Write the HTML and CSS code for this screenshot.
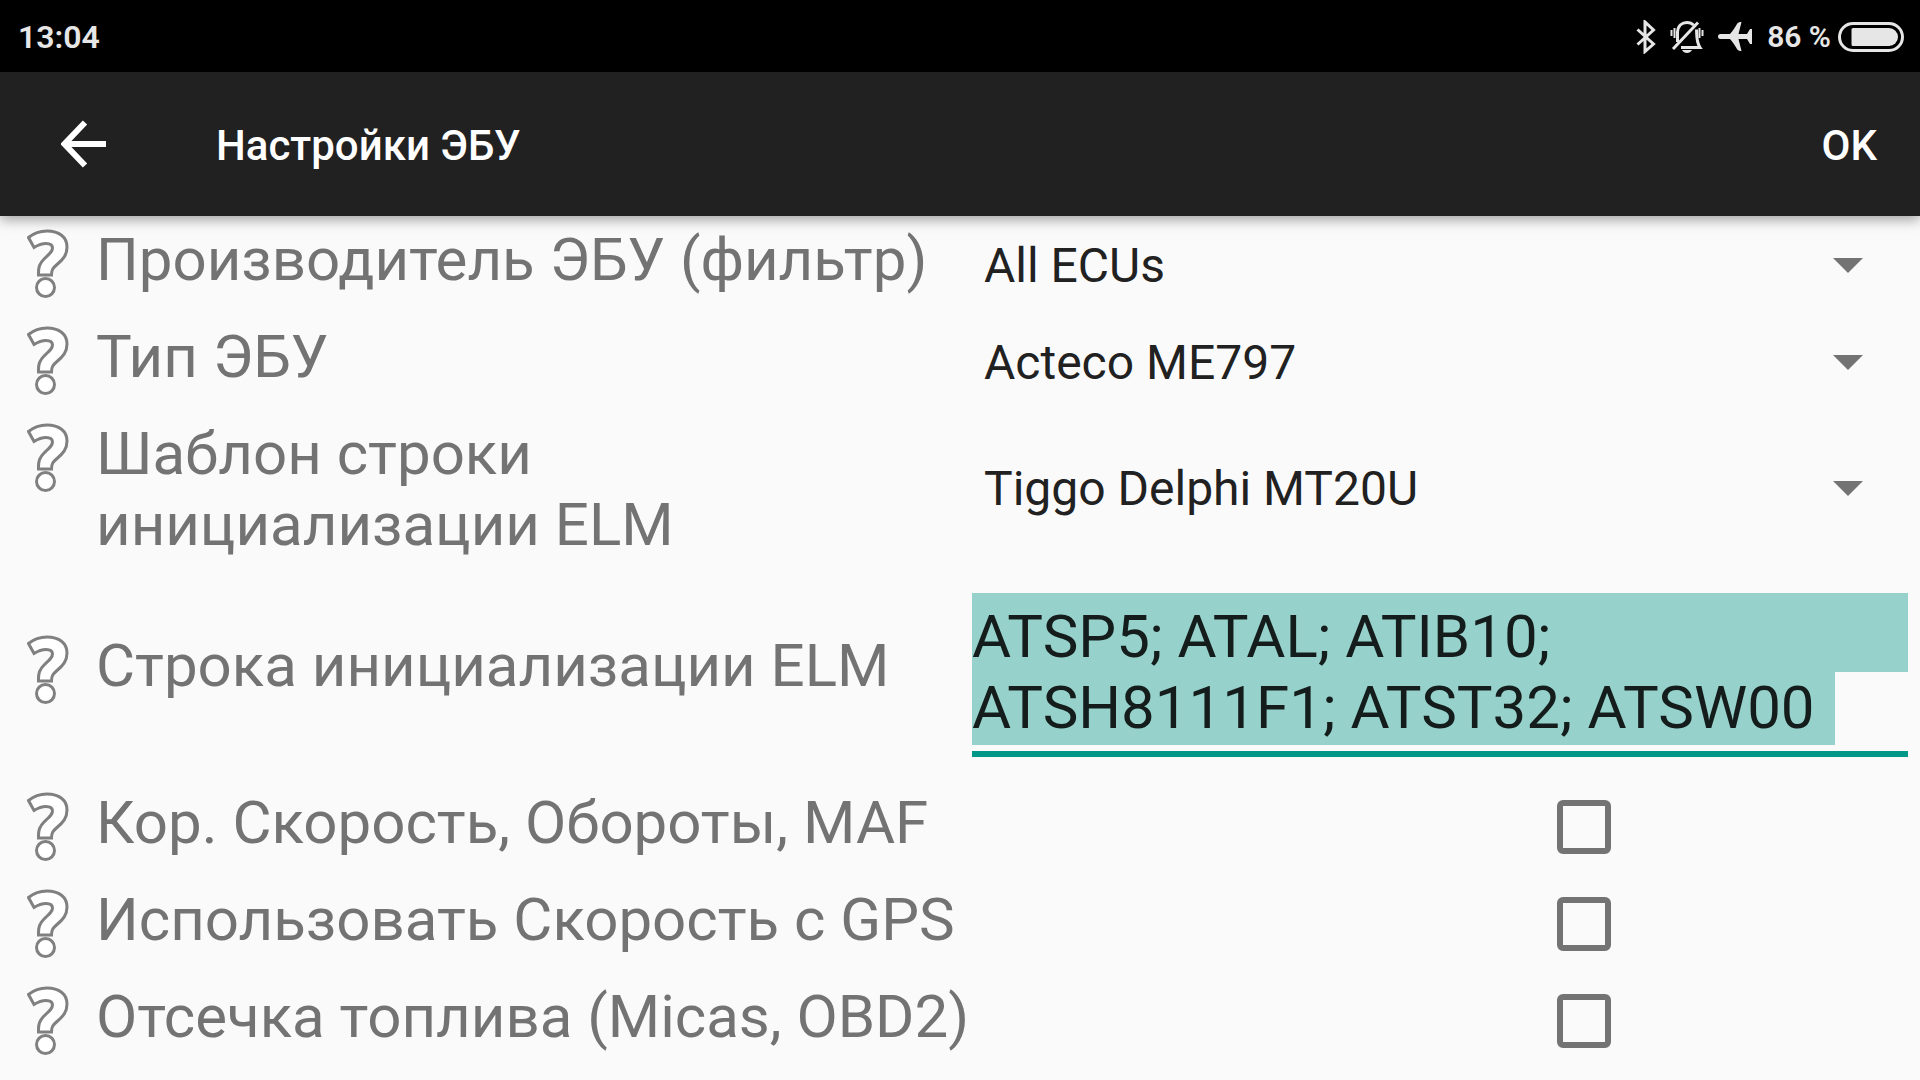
FILE: index.html
```
<!DOCTYPE html>
<html lang="ru">
<head>
  <meta charset="UTF-8" />
  <meta name="viewport" content="width=device-width, initial-scale=1.0" />
  <title>Настройки ЭБУ</title>
  <link rel="stylesheet" href="styles.css">
</head>
<body>

  <!-- shared question mark icon -->
  <svg class="sprite" aria-hidden="true">
    <symbol id="help" viewBox="0 0 42 70">
      <path d="M1.500 8.500C7 4 13 2 20 2c12 0 20 6 20 16c0 8-4 12.500-10 17.500c-4 3.500-5.500 5-5.500 10.500H11.500c-.3-8 1-11.500 6-16.500c5-4.500 8-7 8-10.500c0-3.500-3-4.500-6.500-4.500c-4.500 0-8 1.500-12 4z"/>
      <circle cx="18.500" cy="58.500" r="9"/>
    </symbol>
  </svg>

  <div class="status-bar">
    <span>13:04</span>
    <div class="status-icons">
      <svg class="bluetooth" viewBox="0 0 20 34" width="20" height="34">
        <path d="M1.500 9.500L17.500 24L9 31.500V2L17.500 10L1.500 24.500"/>
      </svg>
      <svg class="bell" viewBox="0 0 34 34" width="34" height="34">
        <path d="M7.500 22V12C8 5.500 12 2.500 17 2.500c3 0 5 1 6.500 2.500M26.500 9.500c.5 6-.5 12 3.500 18H11M3 29L28 2.500"/>
        <path class="thin" d="M1.500 10v6M4.500 8v10M29.500 8v10M32.500 10v6"/>
        <path class="solid" d="M12 30h10c-1 2-3 3-5 3s-4-1-5-3z"/>
      </svg>
      <svg class="plane" viewBox="0 0 34 30" width="34" height="30">
        <path d="M2.500 12H12C15 9 17 5 19 2c1-1.500 2-2 4.500-2L20.500 12H29l3-5h2v15h-2l-3-5h-8.500L23.500 29c-2.500 0-3.500-.5-4.500-2c-2-3-4-7-7-10H2.500a2.500 2.500 0 0 1 0-5z"/>
      </svg>
      <span class="charge">86 %</span>
      <svg class="battery" viewBox="0 0 66 30" width="66" height="30">
        <rect class="shell" x="1.500" y="1.500" width="63" height="27" rx="13.500"/>
        <path d="M15 6h36a9 9 0 0 1 0 18H15a1.500 1.500 0 0 1-1.500-1.500v-15A1.500 1.500 0 0 1 15 6z"/>
      </svg>
    </div>
  </div>

  <header>
    <button class="back-btn" aria-label="Назад">
      <svg viewBox="0 0 46 48" width="46" height="48">
        <path d="M24 2.500L3.500 24L24 45.500M3.500 24H45"/>
      </svg>
    </button>
    <h1>Настройки ЭБУ</h1>
    <button class="ok-btn">OK</button>
  </header>

  <main>
    <div class="row">
      <div class="name">
        <svg class="help"><use href="#help"/></svg>
        <label for="vendor">Производитель ЭБУ (фильтр)</label>
      </div>
      <div class="spinner">
        <select id="vendor"><option>All ECUs</option></select>
        <svg class="arrow" viewBox="0 0 30 15"><path d="M0 0h30L15 15z"/></svg>
      </div>
    </div>

    <div class="row">
      <div class="name">
        <svg class="help"><use href="#help"/></svg>
        <label for="ecuType">Тип ЭБУ</label>
      </div>
      <div class="spinner">
        <select id="ecuType"><option>Acteco ME797</option></select>
        <svg class="arrow" viewBox="0 0 30 15"><path d="M0 0h30L15 15z"/></svg>
      </div>
    </div>

    <div class="row">
      <div class="name">
        <svg class="help"><use href="#help"/></svg>
        <label for="template">Шаблон строки инициализации ELM</label>
      </div>
      <div class="spinner">
        <select id="template"><option>Tiggo Delphi MT20U</option></select>
        <svg class="arrow" viewBox="0 0 30 15"><path d="M0 0h30L15 15z"/></svg>
      </div>
    </div>

    <div class="row init-row">
      <div class="name">
        <svg class="help"><use href="#help"/></svg>
        <label for="initString">Строка инициализации ELM</label>
      </div>
      <textarea id="initString" rows="2" spellcheck="false">ATSP5; ATAL; ATIB10; ATSH8111F1; ATST32; ATSW00 </textarea>
    </div>

    <div class="row check-row">
      <div class="name">
        <svg class="help"><use href="#help"/></svg>
        <label for="correction">Кор. Скорость, Обороты, MAF</label>
      </div>
      <input type="checkbox" id="correction" />
    </div>

    <div class="row check-row">
      <div class="name">
        <svg class="help"><use href="#help"/></svg>
        <label for="gpsSpeed">Использовать Скорость с GPS</label>
      </div>
      <input type="checkbox" id="gpsSpeed" />
    </div>

    <div class="row check-row">
      <div class="name">
        <svg class="help"><use href="#help"/></svg>
        <label for="fuelCut">Отсечка топлива (Micas, OBD2)</label>
      </div>
      <input type="checkbox" id="fuelCut" />
    </div>
  </main>

</body>
</html>
```

FILE: styles.css
```
* {
  box-sizing: border-box;
}

body {
  font-family: Roboto, sans-serif;
  background: #fafafa;
  color: #212121;
  margin: 0;
}

button, select, textarea {
  font-family: inherit;
  color: inherit;
  background: none;
  border: none;
  border-radius: 0;
  outline: none;
  margin: 0;
  padding: 0;
}

svg {
  display: block;
  flex: none;
}

.sprite {
  position: absolute;
  width: 0;
  height: 0;
}

/* status bar */
.status-bar {
  display: flex;
  justify-content: space-between;
  align-items: center;
  height: 72px;
  padding: 1px 16px 0 18px;
  background: #000;
  color: #e6e6e6;
  font-size: 32px;
  font-weight: 600;
}

.status-icons {
  display: flex;
  align-items: center;
}

.status-icons svg {
  fill: #e6e6e6;
}

.status-icons .bluetooth,
.status-icons .bell {
  fill: none;
  stroke: #e6e6e6;
  stroke-width: 3;
}

.status-icons .bell {
  margin: 0 14px;
}

.bell .thin {
  stroke-width: 2;
}

.bell .solid {
  fill: #e6e6e6;
  stroke: none;
}

.status-icons .plane {
  margin-right: 15px;
}

.charge {
  font-size: 30px;
}

.status-icons .battery {
  margin-left: 7px;
}

.battery .shell {
  fill: none;
  stroke: #e6e6e6;
  stroke-width: 3;
}

/* app bar */
header {
  position: relative;
  display: flex;
  align-items: center;
  height: 144px;
  padding: 0 43px 0 61px;
  background: #212121;
  color: #fff;
  box-shadow: 0 4px 12px rgba(0, 0, 0, 0.35);
}

.back-btn {
  cursor: pointer;
}

.back-btn svg {
  fill: none;
  stroke: #fff;
  stroke-width: 6;
}

h1 {
  flex: 1;
  margin: 0 0 0 109px;
  padding-top: 4px;
  font-size: 42px;
  font-weight: 500;
  line-height: 48px;
}

.ok-btn {
  padding-top: 4px;
  font-size: 42px;
  font-weight: 500;
  line-height: 48px;
  cursor: pointer;
}

/* settings list */
main {
  padding: 1px 12px 0 0;
}

.row {
  display: grid;
  grid-template-columns: 972fr 936fr;
}

.name {
  display: flex;
  min-height: 97px;
  padding: 7px 0 5px 27px;
}

.name label {
  margin-left: 27px;
  color: #737373;
  font-size: 60px;
  line-height: 71px;
}

.help {
  width: 42px;
  height: 70px;
  margin-top: 5px;
  fill: #fff;
  stroke: #808080;
  stroke-width: 3;
}

.spinner {
  display: grid;
  align-items: center;
}

.spinner select,
.spinner .arrow {
  grid-area: 1 / 1;
}

.spinner select {
  appearance: none;
  width: 100%;
  height: 97px;
  padding-left: 12px;
  font-size: 48px;
}

.arrow {
  justify-self: end;
  width: 30px;
  height: 15px;
  margin-right: 45px;
  fill: #737373;
  pointer-events: none;
}

.init-row {
  align-items: start;
  padding: 28px 0 23px;
}

.init-row .name {
  padding-top: 37px;
}

/* the whole text is shown selected: full first line, part of the second */
textarea {
  display: block;
  width: 100%;
  padding: 8px 0;
  border-bottom: 6px solid #009688;
  background:
    linear-gradient(#96d2cb, #96d2cb) 0 0 / 100% 79px no-repeat,
    linear-gradient(#96d2cb, #96d2cb) 0 79px / 863px 73px no-repeat;
  color: #141d1c;
  font-size: 60px;
  line-height: 71px;
  resize: none;
  overflow: hidden;
}

.check-row {
  grid-template-columns: 1536fr 372fr;
}

input[type="checkbox"] {
  appearance: none;
  width: 54px;
  height: 54px;
  margin: 20px 0 0 21px;
  border: 6px solid #737373;
  border-radius: 6px;
}
```
